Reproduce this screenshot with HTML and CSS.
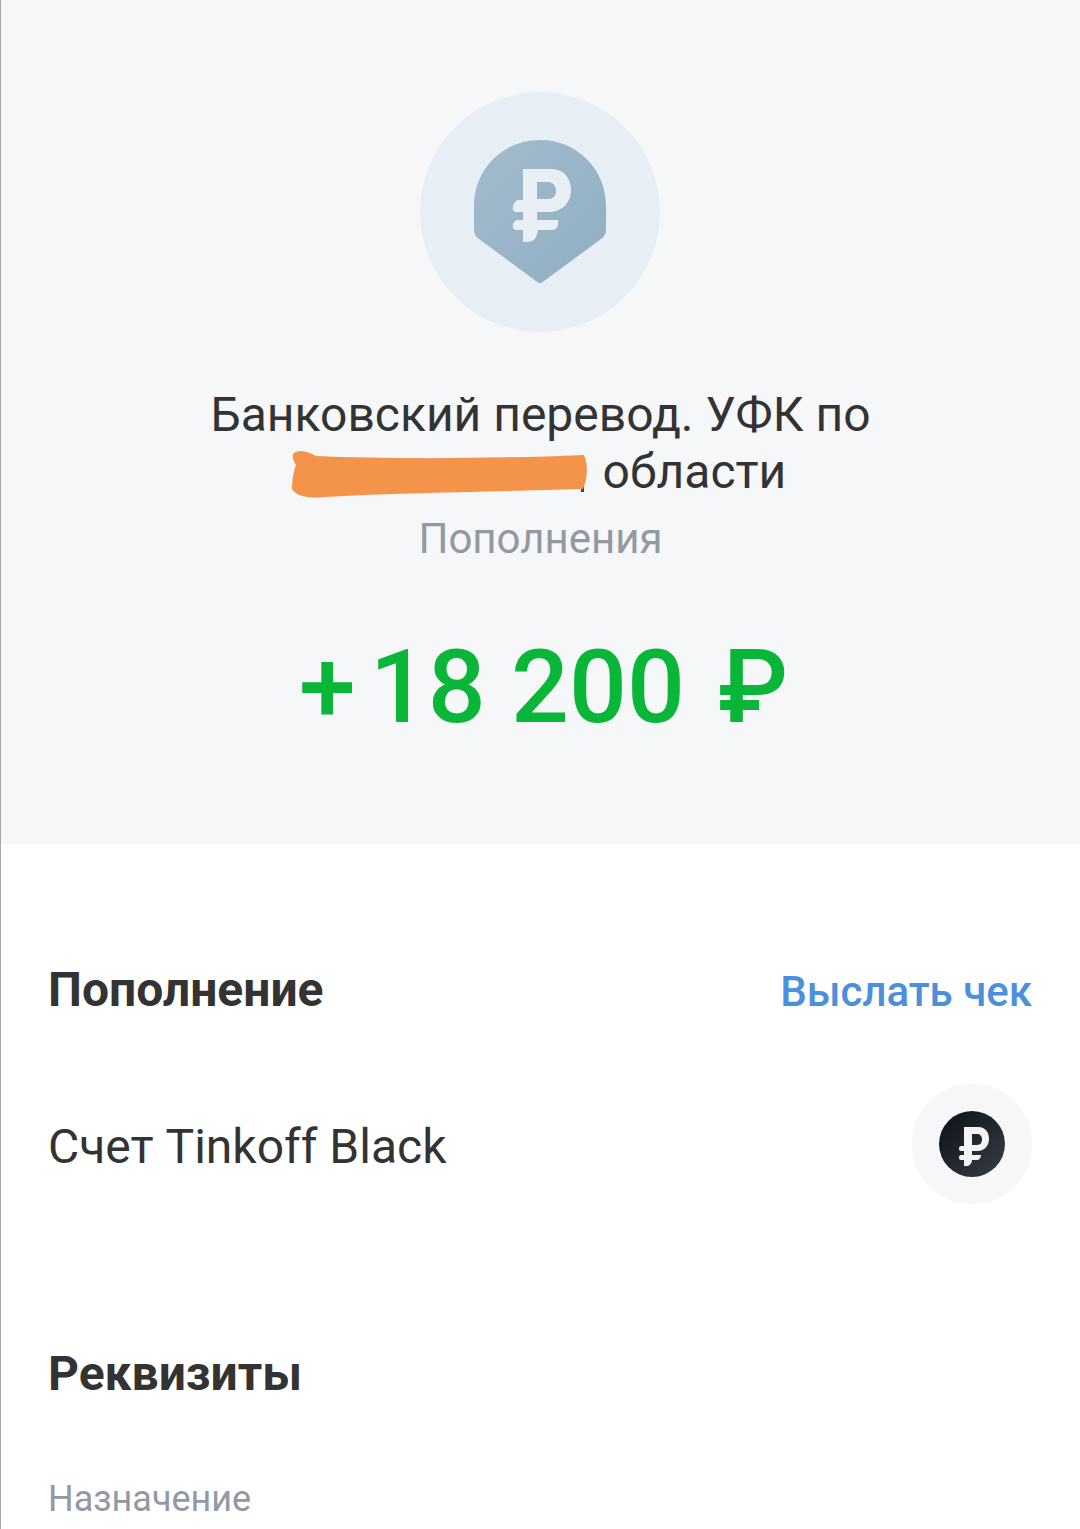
FILE: index.html
```html
<!DOCTYPE html>
<html lang="ru">
<head>
  <meta charset="UTF-8" />
  <title>Операция</title>
  <link rel="stylesheet" href="styles.css">
</head>
<body>
  <div class="top">
    <div class="top-icon">
      <svg class="pin" viewBox="0 0 132 144" width="132" height="144">
        <defs>
          <linearGradient id="pinFill" x1="0" y1="0" x2="1" y2="1">
            <stop offset="0" stop-color="#a3bccd"/>
            <stop offset="1" stop-color="#90aec2"/>
          </linearGradient>
        </defs>
        <path d="M66 0C29 0 0 29 0 66V90C0 94 2 97 5 99L64 142.500C65.500 143.300 66.500 143.300 68 142.500L127 99C130 97 132 94 132 90V66C132 29 103 0 66 0Z" fill="url(#pinFill)"/>
        <path d="M49 29H77C92 29 97 41 97 50C97 65 85 72 76 72H63V80H84C85 85 83 90 78 90H64C63 95 62 99 58 101C55 102 52 102 49 102V90H43C40 90 38 88 39 85C39 82 42 80 44 80H49V72H43C40 72 38 70 39 67C39 64 42 60 44 60H49ZM63 42V59H74C79 59 82 56 82 51C82 46 79 42 74 42Z" fill="#e9eff5" fill-rule="evenodd"/>
      </svg>
    </div>
    <h1 class="title">Банковский перевод. УФК по<br><span class="hidden-part"><svg class="smear" viewBox="0 0 296 50" width="296" height="50"><rect x="289" y="9" width="3" height="33" fill="#444"/><path d="M1 4C6 -1 14 1 24 6C90 9 200 9 292 5C296 14 296 28 291 39C200 42 100 43 34 47C16 49 4 46 0 39C0 30 2 20 4 15C2 12 0 8 1 4Z" fill="#f4934a"/></svg></span> области</h1>
    <div class="category">Пополнения</div>
    <div class="amount">+<span class="amount-num">18 200<span class="amount-cur">₽</span></span></div>
  </div>

  <div class="details">
    <div class="section-head">
      <h2 class="section-title">Пополнение</h2>
      <a class="send-link">Выслать чек</a>
    </div>
    <div class="account">
      <span class="account-name">Счет Tinkoff Black</span>
      <div class="account-icon">
        <svg viewBox="0 0 66 66" width="66" height="66">
          <defs>
            <linearGradient id="coinFill" x1="0" y1="0" x2="1" y2="1">
              <stop offset="0" stop-color="#0b1017"/>
              <stop offset="1" stop-color="#3a3f47"/>
            </linearGradient>
          </defs>
          <circle cx="33" cy="33" r="33" fill="url(#coinFill)"/>
          <path d="M25 16H39C47 16 50 22 50 28C50 36 44 40 39 40H33V44H42C42 47 40 49 38 49H33C33 52 31 54 29 55C28 55 27 55 25 55V49H22C20 49 20 47 20 46C20 45 21 44 22 44H25V40H22C20 40 20 38 20 37C20 36 21 35 22 35H25ZM33 23V34H38C42 34 43 31 43 28C43 25 41 23 38 23Z" fill="#f4f5f6" fill-rule="evenodd"/>
        </svg>
      </div>
    </div>
    <h2 class="section-title requisites">Реквизиты</h2>
    <div class="field-label">Назначение</div>
  </div>
</body>
</html>
```

FILE: styles.css
```css
html, body {
  margin: 0;
  padding: 0;
  height: 100%;
  overflow: hidden;
}
body {
  background: #fff;
  font-family: Roboto, "Noto Sans", sans-serif;
  color: #333;
  border-left: 1px solid #a5a7ab;
  box-sizing: border-box;
}
.top {
  height: 844px;
  box-sizing: border-box;
  background: #f6f7f9;
  padding-top: 92px;
  text-align: center;
}
.top-icon {
  width: 240px;
  height: 240px;
  margin: 0 0 0 419px;
  border-radius: 50%;
  background: #e8eef5;
  display: flex;
  align-items: center;
  justify-content: center;
}
.pin {
  display: block;
}
.title {
  margin: 54px 0 0;
  font-size: 48px;
  font-weight: 400;
  line-height: 57px;
  color: #333;
}
.hidden-part {
  display: inline-block;
  position: relative;
  width: 296px;
  height: 40px;
}
.smear {
  position: absolute;
  left: -3px;
  top: 2px;
}
.category {
  margin-top: 14px;
  font-size: 42px;
  line-height: 50px;
  color: #9299a2;
}
.amount {
  margin: 63px 0 0 6px;
  font-size: 102px;
  font-weight: 500;
  line-height: 120px;
  color: #0ab637;
}
.amount-num {
  margin-left: 14px;
}
.amount-cur {
  margin-left: 33px;
}
.details {
  padding: 116px 48px 0 47px;
}
.section-head {
  display: flex;
  justify-content: space-between;
  align-items: center;
}
.section-title {
  margin: 0;
  font-size: 48px;
  font-weight: 700;
  line-height: 60px;
  color: #333;
}
.send-link {
  font-size: 42px;
  font-weight: 500;
  color: #4c8fdd;
  margin-top: 2px;
}
.account {
  display: flex;
  justify-content: space-between;
  align-items: center;
  margin-top: 64px;
}
.account-name {
  font-size: 48px;
  color: #333;
  margin-top: 4px;
}
.account-icon {
  width: 120px;
  height: 120px;
  border-radius: 50%;
  background: #f6f7f9;
  display: flex;
  align-items: center;
  justify-content: center;
}
.requisites {
  margin-top: 140px;
}
.field-label {
  margin-top: 73px;
  font-size: 36px;
  line-height: 44px;
  color: #9299a2;
}
```
